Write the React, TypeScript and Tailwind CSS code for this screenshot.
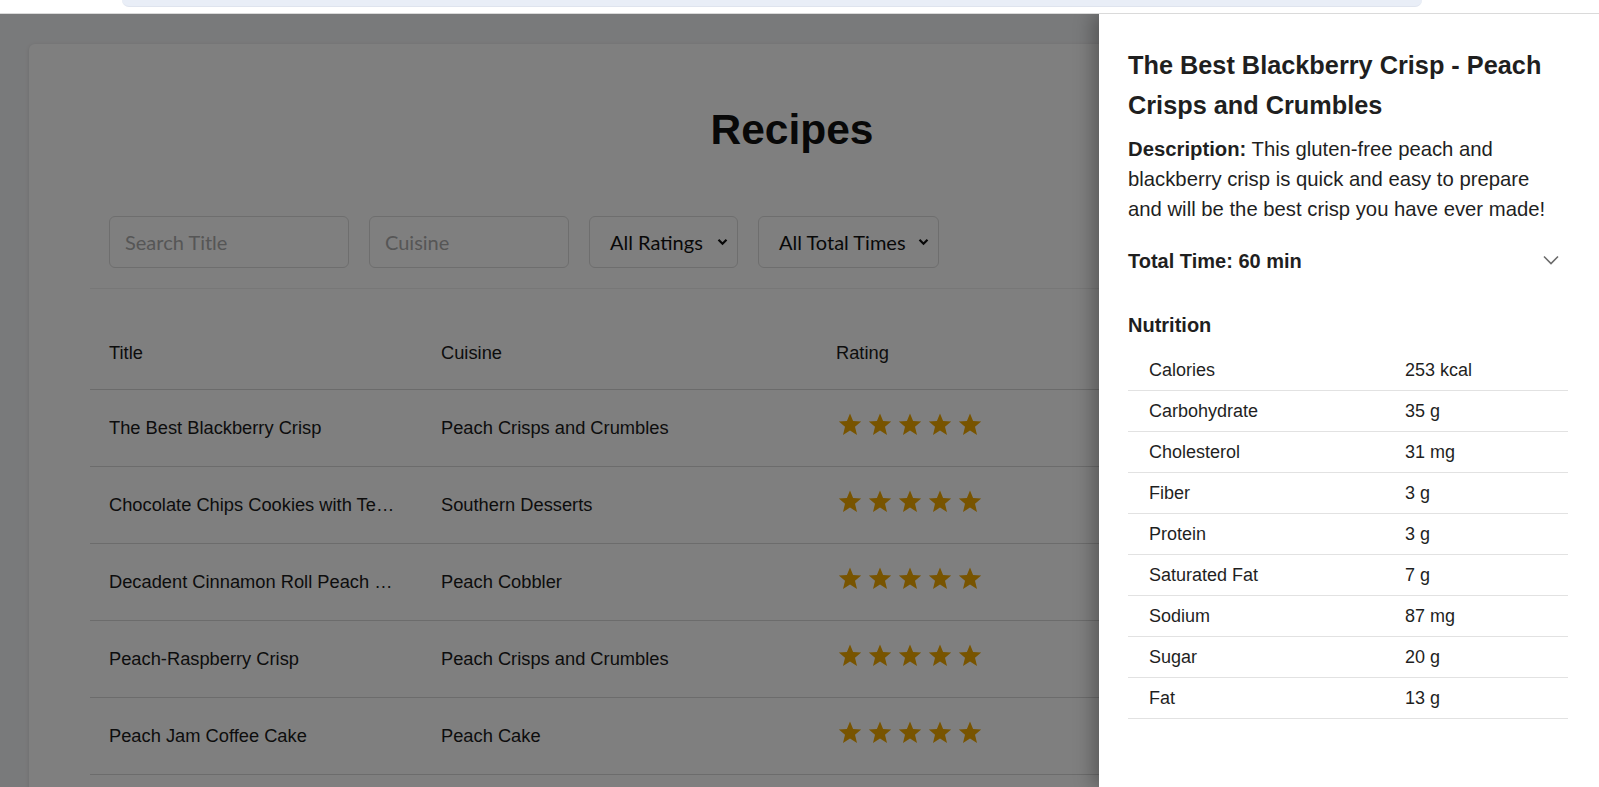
import React from 'react';

type Recipe = {
  title: string;
  cuisine: string;
  rating: number;
  time: string;
};

const recipes: Recipe[] = [
  { title: 'The Best Blackberry Crisp', cuisine: 'Peach Crisps and Crumbles', rating: 5, time: '60 min' },
  { title: 'Chocolate Chips Cookies with Texas Pecans', cuisine: 'Southern Desserts', rating: 5, time: '45 min' },
  { title: 'Decadent Cinnamon Roll Peach Cobbler', cuisine: 'Peach Cobbler', rating: 5, time: '55 min' },
  { title: 'Peach-Raspberry Crisp', cuisine: 'Peach Crisps and Crumbles', rating: 5, time: '50 min' },
  { title: 'Peach Jam Coffee Cake', cuisine: 'Peach Cake', rating: 5, time: '70 min' },
  { title: 'Fresh Peach Cobbler', cuisine: 'Peach Cobbler', rating: 5, time: '65 min' },
];

const nutrition = [
  ['Calories', '253 kcal'],
  ['Carbohydrate', '35 g'],
  ['Cholesterol', '31 mg'],
  ['Fiber', '3 g'],
  ['Protein', '3 g'],
  ['Saturated Fat', '7 g'],
  ['Sodium', '87 mg'],
  ['Sugar', '20 g'],
  ['Fat', '13 g'],
];

function Star() {
  return (
    <svg width="24" height="23" viewBox="0 0 24 23" className="shrink-0">
      <polygon
        points="12,0.5 15.1,8 23.2,8.6 17,13.8 19,21.9 12,17.6 5,21.9 7,13.8 0.8,8.6 8.9,8"
        fill="#f0a800"
      />
    </svg>
  );
}

function SelectArrow() {
  return (
    <svg width="11" height="8" viewBox="0 0 11 8" className="shrink-0">
      <path d="M1.5 1.8 L5.5 5.8 L9.5 1.8" fill="none" stroke="#111" strokeWidth="2.2" />
    </svg>
  );
}

function FakeSelect({ label, width }: { label: string; width: string }) {
  return (
    <div
      className={`${width} h-[52px] flex items-center justify-between pl-[20px] pr-[9px] rounded-[6px] border border-[#dcdcdc] bg-white text-[20px] text-[#111]`}
      style={{ fontFamily: 'Lato, "Noto Sans", sans-serif' }}
    >
      <span>{label}</span>
      <SelectArrow />
    </div>
  );
}

export default function App() {
  return (
    <div
      className="w-[1599px] h-[787px] overflow-hidden bg-white"
      style={{ fontFamily: '"Liberation Sans", Arial, sans-serif' }}
    >
      {/* browser strip */}
      <div className="h-[14px] border-b border-[#dadada] bg-white">
        <div className="ml-[122px] w-[1300px] h-[7px] rounded-b-[12px] bg-[#e9eef7] border-b border-[#dfe4ee]" />
      </div>

      <div className="relative h-[773px] overflow-hidden bg-[#f3f4f6]">
        {/* page */}
        <div className="ml-[29px] mt-[30px] w-[1526px] bg-white rounded-[6px] shadow-[0_1px_4px_rgba(0,0,0,0.12)] px-[61px] pt-[60px] pb-10">
          <h1 className="text-center text-[42.5px] leading-[52px] font-bold text-[#111]">Recipes</h1>

          <div className="mt-[41px] flex gap-[20px] px-[19px] pt-[19px] pb-[20px] border-b border-[#efefef]">
            <input
              placeholder="Search Title"
              className="w-[240px] h-[52px] px-[15px] rounded-[6px] border border-[#dcdcdc] bg-white text-[20px] placeholder:text-[#acacac] outline-none"
              style={{ fontFamily: 'Lato, "Noto Sans", sans-serif' }}
            />
            <input
              placeholder="Cuisine"
              className="w-[200px] h-[52px] px-[15px] rounded-[6px] border border-[#dcdcdc] bg-white text-[20px] placeholder:text-[#acacac] outline-none"
              style={{ fontFamily: 'Lato, "Noto Sans", sans-serif' }}
            />
            <FakeSelect label="All Ratings" width="w-[149px]" />
            <FakeSelect label="All Total Times" width="w-[181px]" />
          </div>

          <table className="mt-[28px] w-full table-fixed border-collapse text-[18.3px] text-[#1a1a1a]">
            <colgroup>
              <col className="w-[332px]" />
              <col className="w-[395px]" />
              <col className="w-[300px]" />
              <col />
            </colgroup>
            <thead>
              <tr className="border-b border-[#d6d6d6]">
                <th className="h-[72px] pl-[19px] text-left font-normal">Title</th>
                <th className="h-[72px] pl-[19px] text-left font-normal">Cuisine</th>
                <th className="h-[72px] pl-[19px] text-left font-normal">Rating</th>
                <th className="h-[72px] pl-[19px] text-left font-normal">Total Time</th>
              </tr>
            </thead>
            <tbody>
              {recipes.map((r) => (
                <tr key={r.title} className="border-b border-[#d9d9d9]">
                  <td className="h-[77px] pl-[19px]">
                    <div className="max-w-[290px] truncate">{r.title}</div>
                  </td>
                  <td className="h-[77px] pl-[19px]">{r.cuisine}</td>
                  <td className="h-[77px] pl-[21px]">
                    <div className="flex gap-[6px] mb-[7px]">
                      {Array.from({ length: r.rating }).map((_, i) => (
                        <Star key={i} />
                      ))}
                    </div>
                  </td>
                  <td className="h-[77px] pl-[19px]">{r.time}</td>
                </tr>
              ))}
            </tbody>
          </table>
        </div>

        {/* overlay */}
        <div className="absolute inset-0 bg-black/50" />

        {/* drawer */}
        <aside className="absolute top-0 right-0 h-full w-[500px] bg-white shadow-[-6px_0_18px_rgba(0,0,0,0.3)] pl-[29px] pr-[31px] pt-[31px] text-[#1f1f1f]">
          <h2 className="text-[25.3px] leading-[40px] font-bold">
            The Best Blackberry Crisp - Peach Crisps and Crumbles
          </h2>
          <p className="mt-[9px] max-w-[432px] text-[20.3px] leading-[30px]">
            <span className="font-bold">Description:</span> This gluten-free peach and blackberry crisp is
            quick and easy to prepare and will be the best crisp you have ever made!
          </p>

          <div className="mt-[22px] flex items-center justify-between h-[30px]">
            <span className="text-[20px] leading-[30px] font-bold">Total Time: 60 min</span>
            <svg width="16" height="10" viewBox="0 0 16 10" className="mr-[9px] mt-[-2px]">
              <path d="M1 1.5 L8 8.5 L15 1.5" fill="none" stroke="#6b6b6b" strokeWidth="1.6" />
            </svg>
          </div>

          <h3 className="mt-[34px] text-[20px] leading-[30px] font-bold">Nutrition</h3>

          <div className="mt-[10px] text-[18px]">
            {nutrition.map(([label, value]) => (
              <div
                key={label}
                className="grid grid-cols-[256px_1fr] h-[41px] items-center border-b border-[#e2e2e2]"
              >
                <span className="pl-[21px]">{label}</span>
                <span className="pl-[21px]">{value}</span>
              </div>
            ))}
          </div>
        </aside>
      </div>
    </div>
  );
}
